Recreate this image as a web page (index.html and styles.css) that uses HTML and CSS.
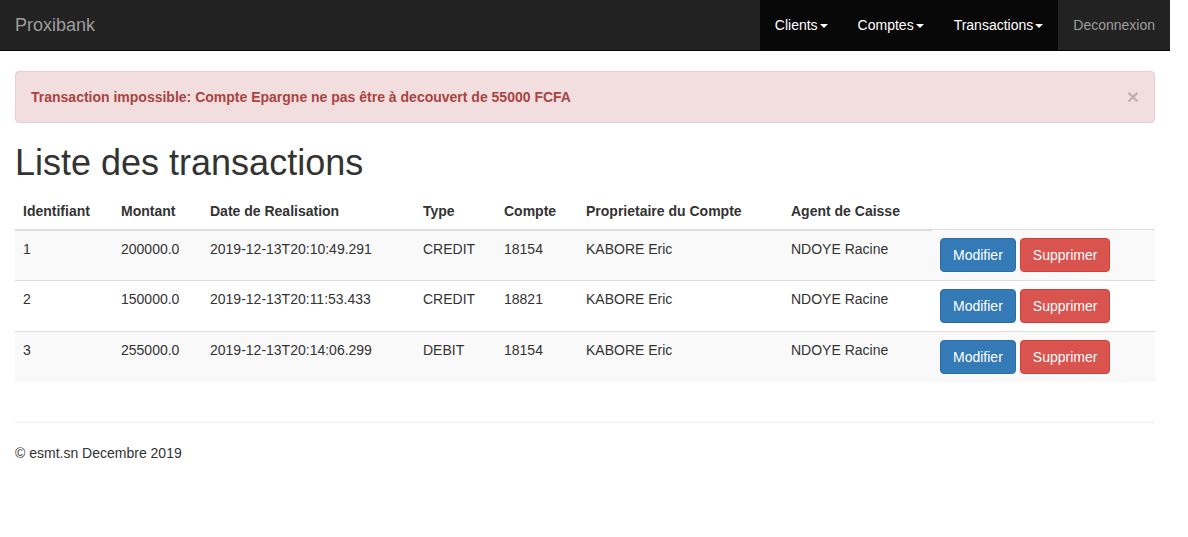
FILE: index.html
```html
<!DOCTYPE html>
<html lang="fr">
<head>
<meta charset="utf-8">
<title>Proxibank</title>
<link rel="stylesheet" href="styles.css">
</head>
<body>
<nav class="navbar">
  <div class="navbar-inner">
    <a class="brand" href="#">Proxibank</a>
    <ul class="nav-right">
      <li class="active"><a href="#">Clients<span class="caret"></span></a></li>
      <li class="active"><a href="#">Comptes<span class="caret"></span></a></li>
      <li class="active"><a href="#">Transactions<span class="caret"></span></a></li>
      <li><a href="#">Deconnexion</a></li>
    </ul>
  </div>
</nav>
<main class="container">
  <div class="alert">
    <strong>Transaction impossible: Compte Epargne ne pas être à decouvert de 55000 FCFA</strong>
    <button class="close" type="button">×</button>
  </div>
  <h1>Liste des transactions</h1>
  <table class="table">
    <colgroup>
      <col class="c1"><col class="c2"><col class="c3"><col class="c4"><col class="c5"><col class="c6"><col class="c7"><col class="c8">
    </colgroup>
    <thead>
      <tr>
        <th>Identifiant</th><th>Montant</th><th>Date de Realisation</th><th>Type</th><th>Compte</th><th>Proprietaire du Compte</th><th>Agent de Caisse</th>
      </tr>
    </thead>
    <tbody>
      <tr>
        <td>1</td><td>200000.0</td><td>2019-12-13T20:10:49.291</td><td>CREDIT</td><td>18154</td><td>KABORE Eric</td><td>NDOYE Racine</td>
        <td><div class="actions"><button class="btn btn-primary">Modifier</button><button class="btn btn-danger">Supprimer</button></div></td>
      </tr>
      <tr>
        <td>2</td><td>150000.0</td><td>2019-12-13T20:11:53.433</td><td>CREDIT</td><td>18821</td><td>KABORE Eric</td><td>NDOYE Racine</td>
        <td><div class="actions"><button class="btn btn-primary">Modifier</button><button class="btn btn-danger">Supprimer</button></div></td>
      </tr>
      <tr>
        <td>3</td><td>255000.0</td><td>2019-12-13T20:14:06.299</td><td>DEBIT</td><td>18154</td><td>KABORE Eric</td><td>NDOYE Racine</td>
        <td><div class="actions"><button class="btn btn-primary">Modifier</button><button class="btn btn-danger">Supprimer</button></div></td>
      </tr>
    </tbody>
  </table>
  <hr>
  <footer>© esmt.sn Decembre 2019</footer>
</main>
</body>
</html>
```
FILE: styles.css
```css
* { box-sizing: border-box; }
html, body { margin: 0; padding: 0; }
body {
  font-family: "Liberation Sans", Arial, sans-serif;
  font-size: 14px;
  line-height: 1.42857143;
  color: #333;
  background: #fff;
  width: 1170px;
}
a { text-decoration: none; }

.navbar {
  background: #222;
  border-bottom: 1px solid #080808;
  min-height: 51px;
  margin-bottom: 20px;
}
.navbar-inner {
  display: flex;
  justify-content: space-between;
  padding: 0 0 0 15px;
  height: 50px;
}
.brand {
  color: #9d9d9d;
  font-size: 18px;
  line-height: 20px;
  padding: 15px 0;
}
.nav-right {
  list-style: none;
  margin: 0;
  padding: 0;
  display: flex;
}
.nav-right a {
  display: block;
  padding: 15px;
  line-height: 20px;
  color: #9d9d9d;
}
.nav-right .active a {
  background: #080808;
  color: #fff;
}
.caret {
  display: inline-block;
  width: 0;
  height: 0;
  margin-left: 2px;
  vertical-align: middle;
  border-top: 4px solid;
  border-right: 4px solid transparent;
  border-left: 4px solid transparent;
}

.container {
  padding: 0 15px;
}
.alert {
  position: relative;
  padding: 15px 35px 15px 15px;
  margin-bottom: 20px;
  border: 1px solid #ebccd1;
  border-radius: 4px;
  background: #f2dede;
  color: #a94442;
}
.close {
  position: absolute;
  top: 14px;
  right: 15px;
  padding: 0;
  border: 0;
  background: transparent;
  font-family: "Liberation Sans", Arial, sans-serif;
  font-size: 21px;
  font-weight: bold;
  line-height: 1;
  color: #000;
  opacity: .2;
  text-shadow: 0 1px 0 #fff;
}
h1 {
  font-size: 36px;
  font-weight: 500;
  line-height: 1.1;
  margin: 20px 0 10px;
}
.table {
  width: 100%;
  border-collapse: collapse;
  border-spacing: 0;
  margin-bottom: 40px;
  table-layout: fixed;
}
.c1 { width: 98px; }
.c2 { width: 89px; }
.c3 { width: 213px; }
.c4 { width: 81px; }
.c5 { width: 82px; }
.c6 { width: 205px; }
.c7 { width: 149px; }
.c8 { width: 223px; }
.table th, .table td {
  padding: 8px;
  line-height: 1.42857143;
  vertical-align: top;
  text-align: left;
}
.table th {
  font-weight: bold;
  vertical-align: bottom;
  border-bottom: 2px solid #ddd;
}
.table td {
  border-top: 1px solid #ddd;
}
.table tbody tr:nth-of-type(odd) { background: #f9f9f9; }
.actions {
  display: flex;
  gap: 4px;
}
.btn {
  display: inline-block;
  padding: 6px 12px;
  font-family: "Liberation Sans", Arial, sans-serif;
  font-size: 14px;
  line-height: 1.42857143;
  border: 1px solid transparent;
  border-radius: 4px;
  color: #fff;
  cursor: pointer;
}
.btn-primary { background: #337ab7; border-color: #2e6da4; }
.btn-danger { background: #d9534f; border-color: #d43f3a; }
hr {
  margin: 20px 0;
  border: 0;
  border-top: 1px solid #eee;
}
footer { line-height: 20px; }
```
